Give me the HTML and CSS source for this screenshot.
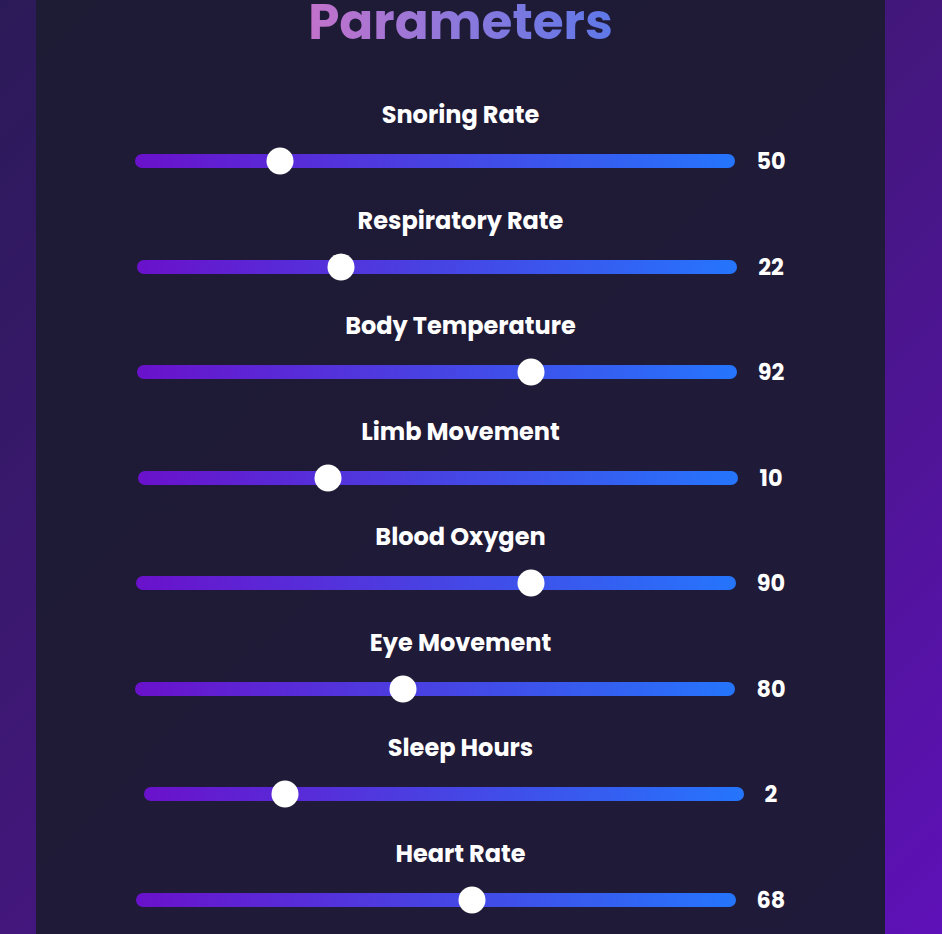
FILE: index.html
```html
<!DOCTYPE html>
<html lang="en">
<head>
  <meta charset="UTF-8">
  <meta name="viewport" content="width=device-width, initial-scale=1.0">
  <title>Sleep Parameters</title>
  <link rel="stylesheet" href="styles.css">
</head>
<body>
  <div id="panel">
    <h1 class="title">Parameters</h1>
    <div id="params"></div>
  </div>

<script>
    const params = [
      { name: "Snoring Rate", value: 50, pos: 23 },
      { name: "Respiratory Rate", value: 22, pos: 33.3 },
      { name: "Body Temperature", value: 92, pos: 66.4 },
      { name: "Limb Movement", value: 10, pos: 30.7 },
      { name: "Blood Oxygen", value: 90, pos: 66.5 },
      { name: "Eye Movement", value: 80, pos: 44.3 },
      { name: "Sleep Hours", value: 2, pos: 22.3 },
      { name: "Heart Rate", value: 68, pos: 56.3 }
    ];

    function renderParams() {
      const box = document.getElementById("params");
      box.innerHTML = "";

      params.forEach((p) => {
        const item = document.createElement("div");
        item.className = "param";

        const label = document.createElement("div");
        label.className = "param-label";
        label.textContent = p.name;
        item.appendChild(label);

        const row = document.createElement("div");
        row.className = "param-row";

        const track = document.createElement("div");
        track.className = "track";
        const rail = document.createElement("div");
        rail.className = "rail";
        const thumb = document.createElement("span");
        thumb.className = "thumb";
        thumb.style.left = p.pos + "%";
        rail.appendChild(thumb);
        track.appendChild(rail);
        row.appendChild(track);

        const val = document.createElement("span");
        val.className = "param-value";
        val.textContent = p.value;
        row.appendChild(val);

        item.appendChild(row);
        box.appendChild(item);
      });
    }

    renderParams();
  </script>
</body>
</html>
```

FILE: styles.css
```css
html, body {
  height: 100%;
}

body {
  margin: 0;
  font-family: "Poppins", "DejaVu Sans", sans-serif;
  background: linear-gradient(135deg, #2b1a58 0%, #43177c 50%, #5e11b8 100%);
  color: #fff;
  overflow: hidden;
}

#panel {
  width: 849px;
  height: 100%;
  margin-left: 36px;
  background: linear-gradient(135deg, #1e1b35, #1f1a39);
}

.title {
  margin: 0 0 56px;
  font-size: 50px;
  line-height: 44px;
  font-weight: bold;
  text-align: center;
  background: linear-gradient(90deg, #c172cb 0%, #8b78dc 50%, #5f78e8 100%);
  background-size: 300px 100%;
  background-position: center;
  background-repeat: no-repeat;
  -webkit-background-clip: text;
  background-clip: text;
  color: transparent;
}

.param {
  height: 105.5px;
}

.param-label {
  font-size: 24px;
  font-weight: bold;
  line-height: 30px;
  text-align: center;
  margin-bottom: 17.5px;
}

.param-row {
  display: flex;
  align-items: center;
  justify-content: center;
  gap: 21px;
  height: 27px;
}

.track {
  width: 600px;
  height: 14px;
  border-radius: 7px;
  background: linear-gradient(90deg, #6a11cb, #2575fc);
}

.rail {
  position: relative;
  height: 100%;
  margin: 0 13px;
}

.thumb {
  position: absolute;
  top: 50%;
  width: 27px;
  height: 27px;
  border-radius: 50%;
  background: #fff;
  transform: translate(-50%, -50%);
}

.param-value {
  font-size: 22.4px;
  font-weight: bold;
}
```
